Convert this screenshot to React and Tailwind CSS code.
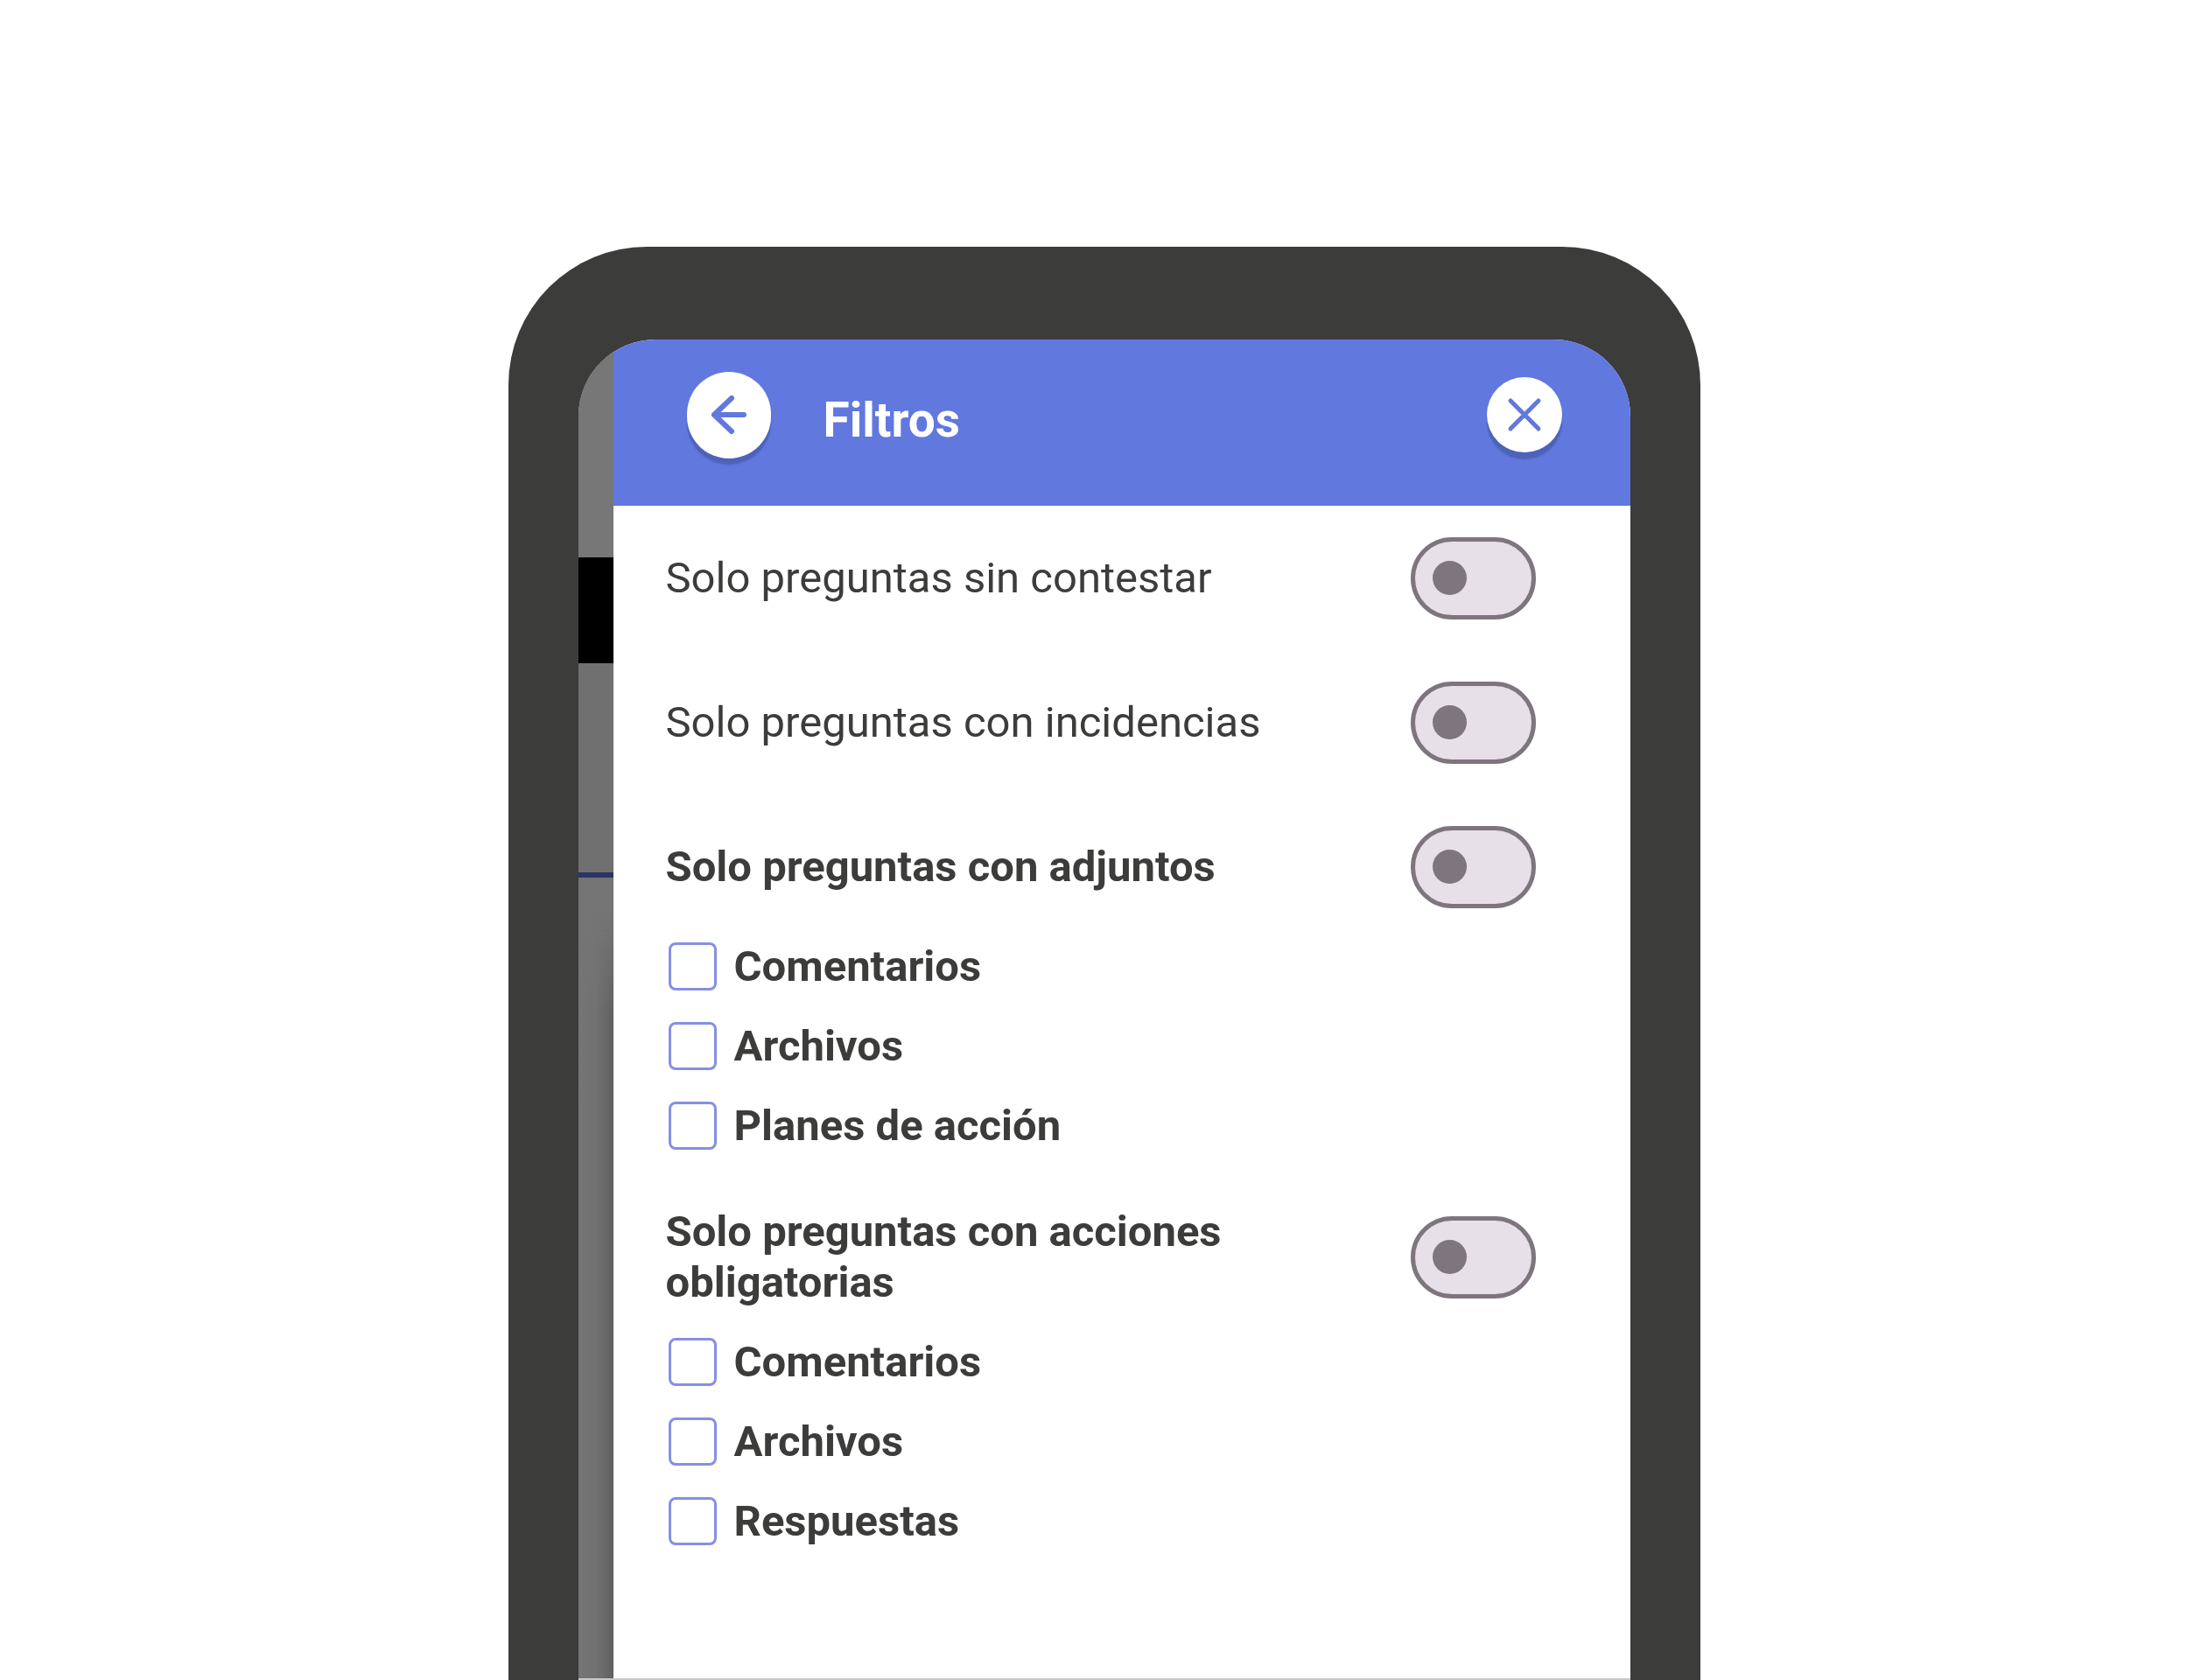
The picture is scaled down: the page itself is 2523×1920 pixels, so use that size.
const attachments = ["Comentarios", "Archivos", "Planes de acción"];
const requiredActions = ["Comentarios", "Archivos", "Respuestas"];

function ToggleRow({ id, label, bold }) {
  return (
    <div className="flex min-h-[165px] items-center justify-between gap-8">
      <label
        htmlFor={id}
        className={
          bold
            ? "max-w-[700px] text-[49px] leading-[58px] font-bold"
            : "max-w-[700px] text-[49px] leading-[58px] font-normal"
        }
      >
        {label}
      </label>
      <input
        id={id}
        type="checkbox"
        role="switch"
        className="flex h-[94px] w-[143px] shrink-0 appearance-none items-center rounded-full border-[5px] border-[#7e757f] bg-[#e8e0e8] px-5 before:size-[39px] before:rounded-full before:bg-[#7e757f] before:content-[''] checked:justify-end"
      />
    </div>
  );
}

function CheckList({ group, items }) {
  return (
    <ul className="flex flex-col gap-9 pt-1">
      {items.map((item) => (
        <li key={item} className="flex items-center gap-5">
          <input
            id={`${group}-${item}`}
            type="checkbox"
            className="ml-[3px] size-[55px] shrink-0 appearance-none rounded-lg border-[3px] border-[#8590e2] bg-white checked:bg-[#6178df]"
          />
          <label htmlFor={`${group}-${item}`} className="text-[49px] leading-[55px] font-bold">
            {item}
          </label>
        </li>
      ))}
    </ul>
  );
}

function Backdrop() {
  return (
    <div className="flex w-10 shrink-0 flex-col bg-[#757575]">
      <div className="h-[249px] bg-[#777777]" />
      <div className="h-[121px] bg-black" />
      <div className="h-[239px] bg-[#707070]" />
      <div className="h-[6px] bg-[#2a3567]" />
      <div className="mt-[40px] flex-1 bg-linear-to-r from-[#757575] via-[#717171] to-[#606060] [mask-image:linear-gradient(to_bottom,transparent,black_120px)]" />
    </div>
  );
}

export default function App() {
  return (
    <div className="flex min-h-screen flex-col bg-white px-8 pt-[282px] font-[Roboto,sans-serif] text-[#3c3c3b]">
      <div className="mx-auto flex w-full max-w-[1362px] flex-1 rounded-t-[158px] bg-[#3c3c3a] px-[80px] pt-[106px]">
        <div className="flex flex-1 overflow-hidden rounded-t-[88px] border-b-2 border-[#c8c8c8] bg-white">
          <Backdrop />
          <div className="flex min-w-0 flex-1 flex-col">
            <header className="flex h-[190px] items-center bg-[#6178df] pr-[78px] pb-[18px] pl-[84px]">
              <button
                type="button"
                aria-label="Volver"
                className="flex h-[99px] w-24 shrink-0 items-center justify-center rounded-full bg-white shadow-[0_7px_2px_#4d62b8]"
              >
                <svg viewBox="0 0 44 48" className="h-12 w-11" fill="none" stroke="#6178df" strokeWidth="6" strokeLinecap="round" strokeLinejoin="round" aria-hidden="true">
                  <path d="M25 5 5 24l20 19M5 24h34" />
                </svg>
              </button>
              <h1 className="flex-1 pt-3 pl-[60px] text-[55px] leading-[64px] font-bold text-white">Filtros</h1>
              <button
                type="button"
                aria-label="Cerrar"
                className="flex size-[86px] shrink-0 items-center justify-center rounded-full bg-white shadow-[0_8px_2px_#4d62b8]"
              >
                <svg viewBox="0 0 40 40" className="size-10" fill="none" stroke="#6178df" strokeWidth="5" strokeLinecap="round" aria-hidden="true">
                  <path d="M4 4l32 32M36 4 4 36" />
                </svg>
              </button>
            </header>
            <main className="flex-1 pr-[108px] pb-[148px] pl-[60px]">
              <ToggleRow id="unanswered" label="Solo preguntas sin contestar" />
              <ToggleRow id="incidents" label="Solo preguntas con incidencias" />
              <ToggleRow id="attachments" label="Solo preguntas con adjuntos" bold />
              <CheckList group="attachments" items={attachments} />
              <div className="pt-10">
                <ToggleRow id="required" label="Solo preguntas con acciones obligatorias" bold />
                <div className="pt-[6px]">
                  <CheckList group="required" items={requiredActions} />
                </div>
              </div>
            </main>
          </div>
        </div>
      </div>
    </div>
  );
}
